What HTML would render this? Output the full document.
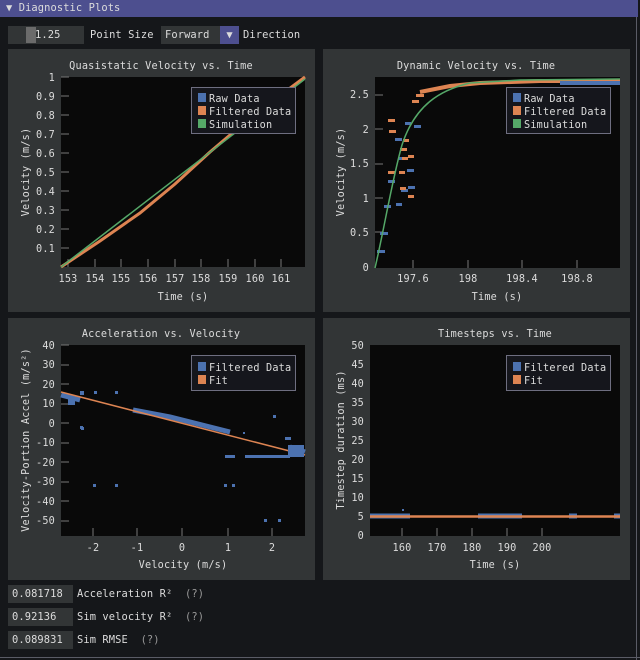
<!DOCTYPE html>
<html><head><style>
*{margin:0;padding:0;box-sizing:border-box}
body{width:640px;height:660px;background:#15171a;font-family:"DejaVu Sans Mono","Liberation Mono",monospace;font-size:10.4px;letter-spacing:0.1px;color:#dcdcdc;position:relative;overflow:hidden}
.abs{position:absolute}
.title{left:0;top:0;width:638px;height:17px;background:#4d4f8f;line-height:17px;padding-left:6px}
.frame{background:#323536}
.inp{background:#323536;height:18px;line-height:18px;padding-left:4px}
.lbl{line-height:18px}
</style></head><body>
<div class="abs" style="left:636px;top:0;width:1px;height:660px;background:#5a5c66"></div>
<div class="abs" style="left:0;top:657px;width:640px;height:1px;background:#5a5c66"></div>
<div class="abs title">▼ Diagnostic Plots</div>
<div class="abs inp" style="left:8px;top:26px;width:76px;padding-left:0"><span class="abs" style="left:18px;top:1px;width:10px;height:16px;background:#6b6b6b"></span><span class="abs" style="left:27px;top:0">1.25</span></div>
<div class="abs lbl" style="left:90px;top:26px">Point Size</div>
<div class="abs inp" style="left:161px;top:26px;width:59px">Forward</div>
<div class="abs" style="left:220px;top:26px;width:19px;height:18px;background:#4d4f8f;text-align:center;line-height:18px">▼</div>
<div class="abs lbl" style="left:243px;top:26px">Direction</div>
<div class="abs frame" style="left:8px;top:49px;width:307px;height:263px"></div>
<div class="abs frame" style="left:323px;top:49px;width:307px;height:263px"></div>
<div class="abs frame" style="left:8px;top:318px;width:307px;height:262px"></div>
<div class="abs frame" style="left:323px;top:318px;width:307px;height:262px"></div>
<div class="abs inp" style="left:8px;top:585px;width:65px">0.081718</div>
<div class="abs lbl" style="left:77px;top:585px">Acceleration R² &nbsp;<span style="color:#999">(?)</span></div>
<div class="abs inp" style="left:8px;top:608px;width:65px">0.92136</div>
<div class="abs lbl" style="left:77px;top:608px">Sim velocity R² &nbsp;<span style="color:#999">(?)</span></div>
<div class="abs inp" style="left:8px;top:631px;width:65px">0.089831</div>
<div class="abs lbl" style="left:77px;top:631px">Sim RMSE &nbsp;<span style="color:#999">(?)</span></div>
<svg class="abs" style="left:0;top:0" width="640" height="660" font-family="DejaVu Sans Mono,Liberation Mono,monospace" font-size="10.2" letter-spacing="0.2" fill="#dcdcdc">
<g fill="#090909"><rect x="61" y="77" width="244" height="190"/><rect x="375" y="77" width="245" height="191"/><rect x="61" y="345" width="244" height="191"/><rect x="370" y="345" width="250" height="191"/></g>
<g text-anchor="middle">
<text x="161" y="69">Quasistatic Velocity vs. Time</text>
<text x="476" y="69">Dynamic Velocity vs. Time</text>
<text x="161" y="337">Acceleration vs. Velocity</text>
<text x="495" y="337">Timesteps vs. Time</text>
<text x="183" y="300">Time (s)</text>
<text x="497" y="300">Time (s)</text>
<text x="183" y="568">Velocity (m/s)</text>
<text x="495" y="568">Time (s)</text>
<text transform="translate(29,172) rotate(-90)">Velocity (m/s)</text>
<text transform="translate(344,172) rotate(-90)">Velocity (m/s)</text>
<text transform="translate(29,440) rotate(-90)">Velocity-Portion Accel (m/s²)</text>
<text transform="translate(344,440) rotate(-90)">Timestep duration (ms)</text>
</g>
<g text-anchor="end">
<text x="55" y="81">1</text><text x="55" y="100">0.9</text><text x="55" y="119">0.8</text><text x="55" y="138">0.7</text><text x="55" y="157">0.6</text><text x="55" y="176">0.5</text><text x="55" y="195">0.4</text><text x="55" y="214">0.3</text><text x="55" y="233">0.2</text><text x="55" y="252">0.1</text>
<text x="369" y="98">2.5</text><text x="369" y="133">2</text><text x="369" y="167">1.5</text><text x="369" y="202">1</text><text x="369" y="236">0.5</text><text x="369" y="271">0</text>
<text x="55" y="349">40</text><text x="55" y="368">30</text><text x="55" y="388">20</text><text x="55" y="407">10</text><text x="55" y="427">0</text><text x="55" y="446">-10</text><text x="55" y="466">-20</text><text x="55" y="485">-30</text><text x="55" y="505">-40</text><text x="55" y="524">-50</text>
<text x="364" y="349">50</text><text x="364" y="368">45</text><text x="364" y="387">40</text><text x="364" y="406">35</text><text x="364" y="425">30</text><text x="364" y="444">25</text><text x="364" y="463">20</text><text x="364" y="482">15</text><text x="364" y="501">10</text><text x="364" y="520">5</text><text x="364" y="539">0</text>
</g>
<g text-anchor="middle">
<text x="68" y="282">153</text><text x="95" y="282">154</text><text x="121" y="282">155</text><text x="148" y="282">156</text><text x="175" y="282">157</text><text x="201" y="282">158</text><text x="228" y="282">159</text><text x="255" y="282">160</text><text x="281" y="282">161</text>
<text x="413" y="282">197.6</text><text x="468" y="282">198</text><text x="522" y="282">198.4</text><text x="577" y="282">198.8</text>
<text x="93" y="551">-2</text><text x="137" y="551">-1</text><text x="182" y="551">0</text><text x="228" y="551">1</text><text x="272" y="551">2</text>
<text x="402" y="551">160</text><text x="437" y="551">170</text><text x="472" y="551">180</text><text x="507" y="551">190</text><text x="542" y="551">200</text>
</g>
<g stroke="#777" stroke-width="1">
<path d="M68 267v-8M95 267v-8M121 267v-8M148 267v-8M175 267v-8M201 267v-8M228 267v-8M255 267v-8M281 267v-8M61 77h8M61 248h8M61 229h8M61 210h8M61 191h8M61 172h8M61 153h8M61 134h8M61 115h8M61 96h8"/>
<path d="M413 268v-8M468 268v-8M522 268v-8M577 268v-8M375 95h8M375 129h8M375 164h8M375 198h8M375 232h8"/>
<path d="M93 536v-8M137 536v-8M182 536v-8M228 536v-8M272 536v-8M61 345h8M61 365h8M61 384h8M61 404h8M61 423h8M61 443h8M61 462h8M61 482h8M61 501h8M61 521h8"/>
<path d="M402 536v-8M437 536v-8M472 536v-8M507 536v-8M542 536v-8"/>
</g>
<!-- plot1 -->
<path d="M61 267 L100 241 L140 213 L175 184 L210 152 L250 118 L305 77" stroke="#dd8452" stroke-width="3" fill="none"/>
<path d="M61 267 L305 79" stroke="#55a868" stroke-width="1.5" fill="none"/>
<!-- plot2 -->
<g fill="#4c72b0"><rect x="377" y="250" width="8" height="3"/><rect x="380" y="232" width="8" height="3"/><rect x="384" y="205" width="7" height="3"/><rect x="388" y="180" width="7" height="3"/><rect x="395" y="138" width="7" height="3"/><rect x="405" y="122" width="6" height="3"/><rect x="398" y="157" width="7" height="3"/><rect x="401" y="189" width="7" height="3"/><rect x="407" y="169" width="7" height="3"/><rect x="396" y="203" width="6" height="3"/><rect x="414" y="125" width="7" height="3"/><rect x="408" y="186" width="7" height="3"/></g>
<g fill="#dd8452"><rect x="388" y="171" width="7" height="3"/><rect x="389" y="130" width="7" height="3"/><rect x="388" y="119" width="7" height="3"/><rect x="399" y="171" width="6" height="3"/><rect x="400" y="187" width="6" height="3"/><rect x="403" y="139" width="6" height="3"/><rect x="402" y="157" width="6" height="3"/><rect x="408" y="155" width="6" height="3"/><rect x="408" y="195" width="6" height="3"/><rect x="400" y="148" width="7" height="3"/><rect x="412" y="100" width="7" height="3"/><rect x="416" y="94" width="8" height="3"/></g>
<path d="M420 92 L450 86 L480 83 L540 81 L620 81" stroke="#dd8452" stroke-width="4" fill="none"/>
<path d="M560 83 L620 83" stroke="#4c72b0" stroke-width="4" fill="none"/>
<path d="M375 268 C384 230 392 180 402 145 C415 105 440 90 470 83 L520 80 L620 79" stroke="#55a868" stroke-width="1.5" fill="none"/>
<!-- plot3 -->
<path d="M61 395 L80 400 M133 410 L170 417 L230 432 M290 447 L305 452" stroke="#4c72b0" stroke-width="5" fill="none"/>
<path d="M61 392 L305 455" stroke="#dd8452" stroke-width="1.5" fill="none"/>
<g fill="#4c72b0"><rect x="68" y="397" width="7" height="8"/><rect x="288" y="445" width="16" height="12"/><rect x="80" y="391" width="4" height="4"/><rect x="94" y="391" width="3" height="3"/><rect x="81" y="427" width="3" height="3"/><rect x="93" y="484" width="3" height="3"/><rect x="115" y="484" width="3" height="3"/><rect x="115" y="391" width="3" height="3"/><rect x="225" y="455" width="10" height="3"/><rect x="245" y="455" width="45" height="3"/><rect x="224" y="484" width="3" height="3"/><rect x="232" y="484" width="3" height="3"/><rect x="273" y="415" width="3" height="3"/><rect x="285" y="437" width="6" height="3"/><rect x="80" y="426" width="3" height="3"/><rect x="243" y="432" width="2" height="2"/><rect x="264" y="519" width="3" height="3"/><rect x="278" y="519" width="3" height="3"/></g>
<!-- plot4 -->
<path d="M370 516 L410 516 M478 516 L522 516 M569 516 L577 516 M614 516 L620 516" stroke="#4c72b0" stroke-width="5" fill="none"/>
<rect x="402" y="509" width="2" height="2" fill="#4c72b0"/>
<path d="M370 516.5 L620 516.5" stroke="#dd8452" stroke-width="2.5"/>
<!-- legends -->
<g stroke="#6e6e80" fill="#15161c">
<rect x="191.5" y="87.5" width="104" height="46"/><rect x="506.5" y="87.5" width="104" height="46"/>
<rect x="191.5" y="355.5" width="104" height="35"/><rect x="506.5" y="355.5" width="104" height="35"/></g>
<g stroke="none">
<rect x="198" y="93" width="8" height="9" fill="#4c72b0"/><rect x="198" y="106" width="8" height="9" fill="#dd8452"/><rect x="198" y="119" width="8" height="9" fill="#55a868"/>
<text x="209" y="102">Raw Data</text><text x="209" y="115">Filtered Data</text><text x="209" y="128">Simulation</text>
<rect x="513" y="93" width="8" height="9" fill="#4c72b0"/><rect x="513" y="106" width="8" height="9" fill="#dd8452"/><rect x="513" y="119" width="8" height="9" fill="#55a868"/>
<text x="524" y="102">Raw Data</text><text x="524" y="115">Filtered Data</text><text x="524" y="128">Simulation</text>
<rect x="198" y="362" width="8" height="9" fill="#4c72b0"/><rect x="198" y="375" width="8" height="9" fill="#dd8452"/>
<text x="209" y="371">Filtered Data</text><text x="209" y="384">Fit</text>
<rect x="513" y="362" width="8" height="9" fill="#4c72b0"/><rect x="513" y="375" width="8" height="9" fill="#dd8452"/>
<text x="524" y="371">Filtered Data</text><text x="524" y="384">Fit</text>
</g>
</svg>
</body></html>
